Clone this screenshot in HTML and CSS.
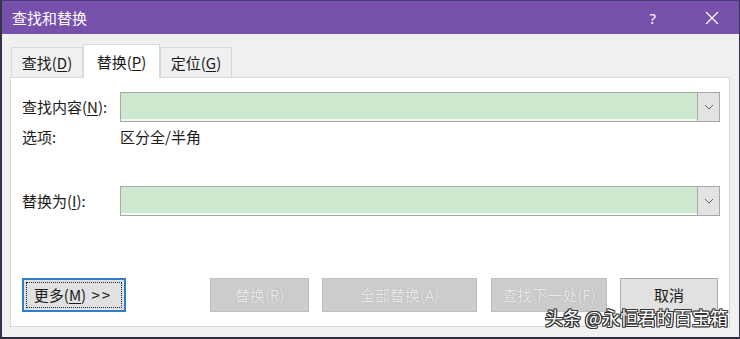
FILE: index.html
```html
<!DOCTYPE html>
<html lang="zh-CN">
<head>
<meta charset="utf-8">
<title>查找和替换</title>
<link rel="stylesheet" href="styles.css">
</head>
<body>
<div class="window">
  <div class="titlebar">
    <span class="title">查找和替换</span>
    <span class="help">?</span>
    <span class="close">
      <svg width="14" height="14" viewBox="0 0 14 14"><path d="M1 1 L13 13 M13 1 L1 13" stroke="#fff" stroke-width="1.2" fill="none"/></svg>
    </span>
  </div>
  <div class="client">
    <div class="tabs">
      <div class="tab t1">查找(<u>D</u>)</div>
      <div class="tab t2 active">替换(<u>P</u>)</div>
      <div class="tab t3">定位(<u>G</u>)</div>
    </div>
    <div class="panel">
      <div class="row first">
        <div class="label">查找内容(<u>N</u>):</div>
        <div class="combo">
          <div class="field"></div>
          <div class="drop"><svg width="10" height="6" viewBox="0 0 10 6"><polyline points="1,1 5,5 9,1" fill="none" stroke="#606060" stroke-width="1"/></svg></div>
        </div>
      </div>
      <div class="row options">
        <div class="label">选项:</div>
        <div class="value">区分全/半角</div>
      </div>
      <div class="row second">
        <div class="label">替换为(<u>I</u>):</div>
        <div class="combo">
          <div class="field"></div>
          <div class="drop"><svg width="10" height="6" viewBox="0 0 10 6"><polyline points="1,1 5,5 9,1" fill="none" stroke="#606060" stroke-width="1"/></svg></div>
        </div>
      </div>
      <div class="buttons">
        <button class="btn more"><span class="focus">更多(<u>M</u>) <span class="arrows">&gt;&gt;</span></span></button>
        <button class="btn dis b-rep">替换(R)</button>
        <button class="btn dis b-all">全部替换(A)</button>
        <button class="btn dis b-next">查找下一处(F)</button>
        <button class="btn b-cancel">取消</button>
      </div>
    </div>
  </div>
  <div class="watermark">头条 @永恒君的百宝箱</div>
</div>
</body>
</html>
```
FILE: styles.css
```css
* { box-sizing: border-box; }
html, body { margin: 0; padding: 0; }
body {
  width: 740px;
  height: 339px;
  overflow: hidden;
  font-family: "Noto Sans CJK SC", "Noto Sans", sans-serif;
  font-size: 15px;
  color: #1a1a1a;
  background: #f0f0f0;
}
.window {
  position: relative;
  width: 740px;
  height: 339px;
  border-top: 1px solid #4a3a78;
  border-right: 1px solid #3a3550;
  border-left: 2px solid #353247;
  border-bottom: 2px solid #2e2c3c;
  background: #f0f0f0;
  display: flex;
  flex-direction: column;
}
.titlebar {
  height: 33px;
  background: #7650aa;
  color: #fff;
  display: flex;
  align-items: center;
  padding-left: 10px;
  flex: none;
}
.title { font-size: 15px; line-height: 20px; }
.help { margin-left: auto; font-size: 15px; line-height: 20px; margin-right: 49px; font-family: "Noto Sans", sans-serif; }
.close { display: flex; width: 14px; height: 14px; margin-right: 20px; }
.client {
  padding: 10px 9px 10px 8px;
  flex: none;
}
.tabs {
  display: flex;
  align-items: flex-end;
  height: 33px;
  padding-left: 1px;
}
.tab {
  height: 30px;
  border: 1px solid #d9d9d9;
  border-bottom: none;
  background: #f0f0f0;
  display: flex;
  align-items: center;
  justify-content: center;
  line-height: 20px;
  padding-top: 1px;
}
.t1 { width: 72px; }
.t2 { width: 77px; }
.t3 { width: 72px; }
.tab.active {
  height: 34px;
  background: #fff;
  margin-bottom: -1px;
  position: relative;
  z-index: 1;
  padding-top: 0;
}
.tab u, .label u, .btn u { text-decoration: underline; text-underline-offset: 2px; }
.panel {
  width: 720px;
  height: 250px;
  background: #fff;
  border: 1px solid #d9d9d9;
  padding: 0 9px 0 11px;
}
.row { display: flex; align-items: center; }
.row.first { margin-top: 14px; height: 30px; }
.row.options { margin-top: 5px; height: 20px; }
.row.second { margin-top: 39px; height: 30px; }
.label { width: 98px; line-height: 20px; flex: none; }
.value { line-height: 20px; }
.combo {
  display: flex;
  width: 600px;
  height: 30px;
}
.field {
  flex: 1;
  background: #cce8cf;
  border: 1px solid #a8a8a8;
  border-right: none;
  box-shadow: inset 0 -2px 0 #f4f9f4;
}
.drop {
  width: 23px;
  background: #e3e3e3;
  border: 1px solid #a8a8a8;
  display: flex;
  align-items: center;
  justify-content: center;
}
.buttons {
  display: flex;
  margin-top: 62px;
  height: 34px;
}
.btn {
  height: 34px;
  font-family: inherit;
  font-size: 15px;
  line-height: 20px;
  padding: 0;
  border: 1px solid #adadad;
  background: #e1e1e1;
  color: #1a1a1a;
  display: flex;
  align-items: center;
  justify-content: center;
}
.more {
  width: 104px;
  border: 2px solid #2f7fc8;
  padding: 2px;
}
.more .focus {
  width: 100%;
  height: 100%;
  border: 1px dotted #202020;
  display: flex;
  align-items: center;
  justify-content: center;
  padding-right: 2px;
  white-space: pre;
}
.arrows { letter-spacing: 2px; margin-left: 2px; }
.dis {
  background: #cccccc;
  border-color: #bfbfbf;
  color: #e9e9e9;
  text-shadow: 0 0 1px #9a9a9a;
}
.b-rep { width: 99px; margin-left: 84px; }
.b-all { width: 155px; margin-left: 13px; }
.b-next { width: 116px; margin-left: 14px; }
.b-cancel { width: 98px; margin-left: 13px; }
.watermark {
  position: absolute;
  right: 11px;
  bottom: 9px;
  font-size: 18px;
  line-height: 22px;
  color: #fff;
  text-shadow: 1px 0 0 #333, -1px 0 0 #333, 0 1px 0 #333, 0 -1px 0 #333, 1px 1px 0 #333, -1px -1px 0 #333, 1px -1px 0 #333, -1px 1px 0 #333;
}
```
